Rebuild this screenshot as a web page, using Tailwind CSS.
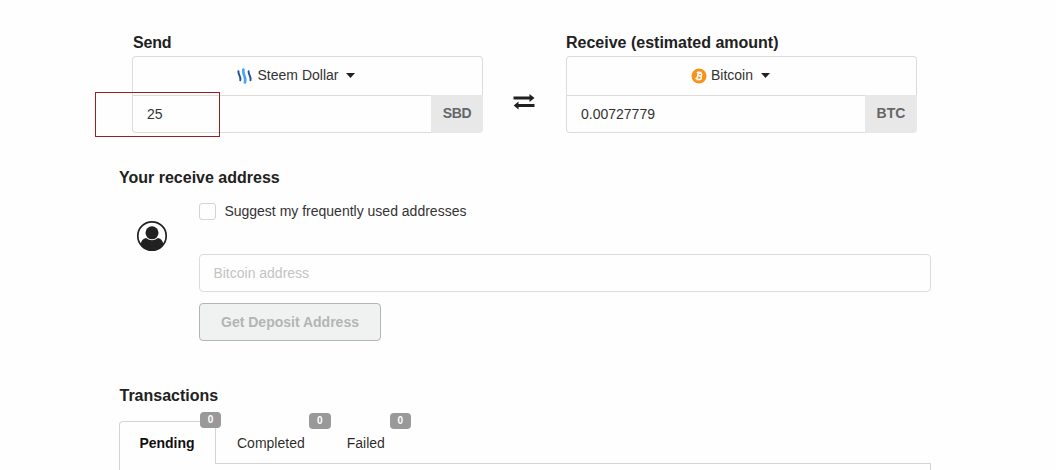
<!DOCTYPE html>
<html lang="en">
<head>
    <meta charset="UTF-8">
    <meta name="viewport" content="width=device-width, initial-scale=1.0">
    <title>Exchange</title>
    <script src="https://cdn.jsdelivr.net/npm/@tailwindcss/browser@4"></script>
</head>
<body class="h-[470px] overflow-hidden bg-[#fefefe] font-['Liberation_Sans',Arial,sans-serif] text-sm text-[#333]">
    <main class="ml-[119px] w-[812px] pt-8">

        <!-- Exchange form -->
        <div class="flex pl-[13px]">
            <section class="relative w-[351px]">
                <h2 class="h-6 pl-px text-base leading-[22px] font-bold tracking-[-0.2px] text-[#212121]">Send</h2>
                <div class="flex h-[39px] items-center justify-center rounded-t border border-b-0 border-[#dcdcdc] pr-[23px] pb-0.5">
                    <svg class="mt-0.5 mr-[5px] h-4 w-4" viewBox="0 0 16 16" fill="none" stroke-linecap="round">
                        <path d="M1.400 3.200C.9 6.800 4.300 8.200 3.300 12.400" stroke="#1f5197" stroke-width="1.900"/>
                        <path d="M6.400 1.600C5.200 6.800 9.600 8.600 7.900 14.400" stroke="#4ba2f2" stroke-width="2.700"/>
                        <path d="M11.600 3.200C11.100 6.800 14.500 8.200 13.500 12.400" stroke="#1f5197" stroke-width="1.900"/>
                    </svg>
                    <span>Steem Dollar</span>
                    <svg class="ml-2 h-[5px] w-[9px]" viewBox="0 0 9 5"><path d="M0 0h9L4.5 5z" fill="#212121"/></svg>
                </div>
                <div class="flex h-[38px]">
                    <div class="flex flex-1 items-center rounded-bl border border-r-0 border-[#dcdcdc] pl-3.5">25</div>
                    <div class="flex w-[52px] items-center justify-center rounded-br bg-[#e8e8e8] pb-0.5 font-bold tracking-[-0.3px] text-[#666]">SBD</div>
                </div>
                <!-- Amount highlight -->
                <div class="absolute top-[60px] -left-[37px] h-[45px] w-[125px] border border-[#982025]"></div>
            </section>

            <div class="flex w-[83px] justify-center pt-[61px] pr-0.5">
                <svg class="h-[18px] w-[22px]" viewBox="0 0 22 18" fill="#212121">
                    <path d="M.5 3.500h16V.9L21.500 5l-5 4.100V6.500H.5z"/>
                    <path d="M21.500 11h-16V8.400L.7 12.500l4.800 4.100V14h16z"/>
                </svg>
            </div>

            <section class="w-[351px]">
                <h2 class="h-6 text-base leading-[22px] font-bold text-[#212121]">Receive (estimated amount)</h2>
                <div class="flex h-[39px] items-center justify-center rounded-t border border-b-0 border-[#dcdcdc] pr-[22px] pb-0.5">
                    <svg class="mt-0.5 mr-1 h-4 w-4" viewBox="0 0 16 16">
                        <circle cx="8" cy="8" r="7.5" fill="#f7931a"/>
                        <g transform="translate(0 -.5) rotate(14 8 8.5)" fill="none" stroke="#fff" stroke-width="1.5">
                            <path d="M5 5.4h3.8a1.5 1.5 0 0 1 0 3H6.6h2.5a1.6 1.6 0 0 1 0 3.3H5M6.6 5.4v6.3"/>
                            <path d="M7 3.8v1.4M9 3.8v1.4M7 11.8v1.4M9 11.8v1.4" stroke-width="1"/>
                        </g>
                    </svg>
                    <span>Bitcoin</span>
                    <svg class="ml-2 h-[5px] w-[9px]" viewBox="0 0 9 5"><path d="M0 0h9L4.5 5z" fill="#212121"/></svg>
                </div>
                <div class="flex h-[38px]">
                    <div class="flex flex-1 items-center rounded-bl border border-r-0 border-[#dcdcdc] pl-3.5">0.00727779</div>
                    <div class="flex w-[52px] items-center justify-center rounded-br bg-[#e8e8e8] pb-0.5 font-bold text-[#666]">BTC</div>
                </div>
            </section>
        </div>

        <!-- Receive address -->
        <section class="pt-[34px]">
            <h2 class="h-9 text-base leading-[22px] font-bold text-[#212121]">Your receive address</h2>
            <div class="flex">
                <div class="w-20 pt-[17px] pl-[17px]">
                    <svg class="h-8 w-8" viewBox="0 0 32 32">
                        <circle cx="16" cy="16" r="14.2" fill="none" stroke="#212121" stroke-width="1.7"/>
                        <circle cx="16" cy="12.800" r="6.500" fill="#212121"/>
                        <path d="M4.500 24.500C5.200 20.600 7 18.400 10 18Q16 22.600 22 18C25 18.400 26.800 20.600 27.500 24.500A14.500 14.500 0 0 1 4.500 24.500z" fill="#212121"/>
                    </svg>
                </div>
                <div class="flex-1">
                    <label class="flex h-[17px] items-center">
                        <span class="mr-2 h-[17px] w-[17px] rounded-[3px] border border-[#d4d4d5]"></span>
                        <span class="pb-0.5 pl-[0.4px]">Suggest my frequently used addresses</span>
                    </label>
                    <div class="mt-[34px] flex h-[38px] items-center rounded border border-[#dcdcdc] pl-[13.4px] text-[#c3c3c3]">Bitcoin address</div>
                    <button class="mt-[11px] flex h-[38px] w-[182px] items-center justify-center rounded border border-[#b3b5b4] bg-[#f0f2f1] font-bold text-[#b3b5b4]">Get Deposit Address</button>
                </div>
            </div>
        </section>

        <!-- Transactions -->
        <section class="pt-11">
            <h2 class="h-9 pl-[0.5px] text-base leading-[22px] font-bold text-[#212121]">Transactions</h2>
            <div class="flex h-[43px] text-black/85">
                <div class="relative flex w-[97px] items-center justify-center rounded-t border border-b-0 border-[#d4d4d5] pr-px font-bold text-black/95">
                    Pending
                    <span class="absolute -top-[10px] -right-[6px] h-4 w-[21px] rounded bg-[#999] text-center text-[10px] leading-4 font-bold text-white">0</span>
                </div>
                <div class="flex flex-1 items-center border-b border-[#d4d4d5] pt-0.5 pl-[21px]">
                    <div class="relative mr-[42px]">
                        Completed
                        <span class="absolute -top-5 -right-[26px] h-4 w-[22px] rounded bg-[#999] text-center text-[10px] leading-4 font-bold text-white">0</span>
                    </div>
                    <div class="relative">
                        Failed
                        <span class="absolute -top-5 -right-[26px] h-4 w-[21px] rounded bg-[#999] text-center text-[10px] leading-4 font-bold text-white">0</span>
                    </div>
                </div>
            </div>
            <div class="h-1.5 border-x border-[#d4d4d5]"></div>
        </section>
    </main>
</body>
</html>
